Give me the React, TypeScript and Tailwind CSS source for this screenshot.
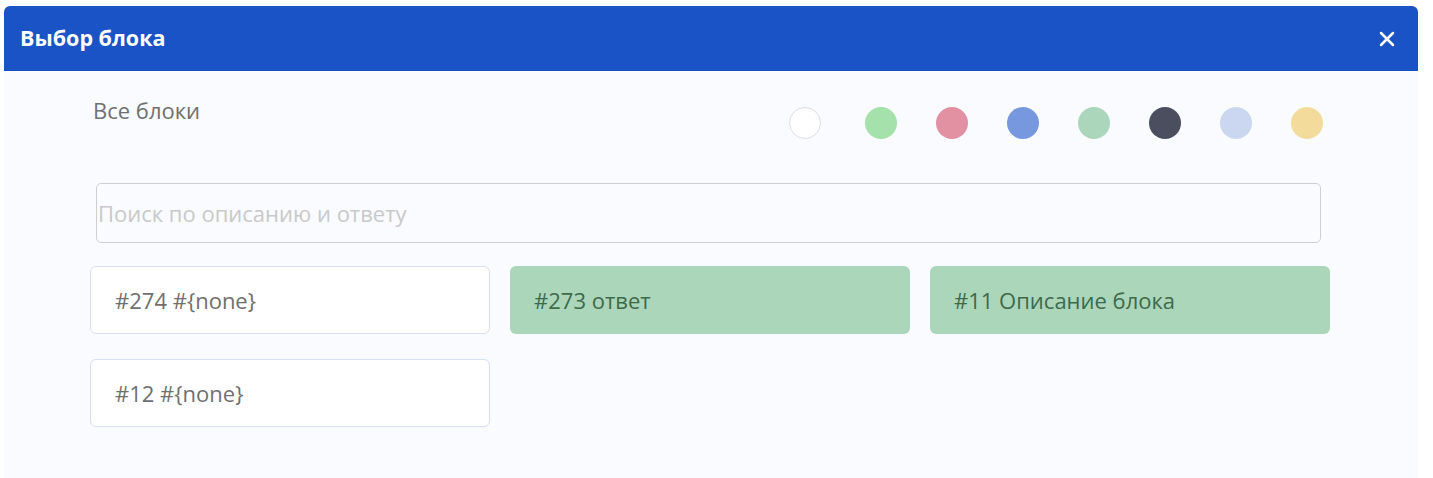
import { X } from "lucide-react";

const colors = [
  "bg-white border border-[#dcdee3]",
  "bg-[#a5e1ab]",
  "bg-[#e291a3]",
  "bg-[#7797df]",
  "bg-[#acd6bb]",
  "bg-[#4a4e5f]",
  "bg-[#cbd7f1]",
  "bg-[#f3db9c]",
];

const blocks = [
  { id: 274, text: "#{none}", green: false },
  { id: 273, text: "ответ", green: true },
  { id: 11, text: "Описание блока", green: true },
  { id: 12, text: "#{none}", green: false },
];

export default function App() {
  return (
    <div className="min-h-screen bg-white pt-[6px] pl-[4px] font-['Open_Sans',sans-serif]">
      <div className="w-[1414px] rounded-t-[6px] overflow-hidden bg-[#f9fbff]">
        <div className="h-[65px] bg-[#1a53c6] flex items-center justify-between pl-[16px] pr-[19px]">
          <h2 className="text-white text-[21.5px] font-bold">Выбор блока</h2>
          <X className="w-[24px] h-[24px] text-white" strokeWidth={2.5} />
        </div>
        <div className="pl-[86px] pt-[24px] pb-[52px]">
          <div className="flex items-start justify-between w-[1233px] pl-[3px]">
            <span className="text-[22px] text-[#707070] leading-[30px]">Все блоки</span>
            <div className="flex items-center gap-[39px] mt-[12px]">
              {colors.map((c, i) => (
                <span key={i} className={`block w-[32px] h-[32px] rounded-full ${c} ${i === 0 ? "mr-[5px]" : ""}`} />
              ))}
            </div>
          </div>
          <div className="pl-[6px] mt-[44px]">
            <input
              type="text"
              placeholder="Поиск по описанию и ответу"
              className="w-[1225px] h-[60px] border border-[#cfcfcf] rounded-[5px] bg-transparent px-[1px] text-[22px] placeholder:text-[#c9c9c9] focus:outline-none"
            />
          </div>
          <div className="grid grid-cols-[400px_400px_400px] gap-x-[20px] gap-y-[25px] mt-[23px]">
            {blocks.map((b) => (
              <div
                key={b.id}
                className={`h-[68px] rounded-[6px] flex items-center px-[24px] text-[22px] ${
                  b.green
                    ? "bg-[#acd6ba] text-[#3e6a4c]"
                    : "bg-white border border-[#d5def3] text-[#6f6f6f]"
                }`}
              >
                #{b.id} {b.text}
              </div>
            ))}
          </div>
        </div>
      </div>
    </div>
  );
}
